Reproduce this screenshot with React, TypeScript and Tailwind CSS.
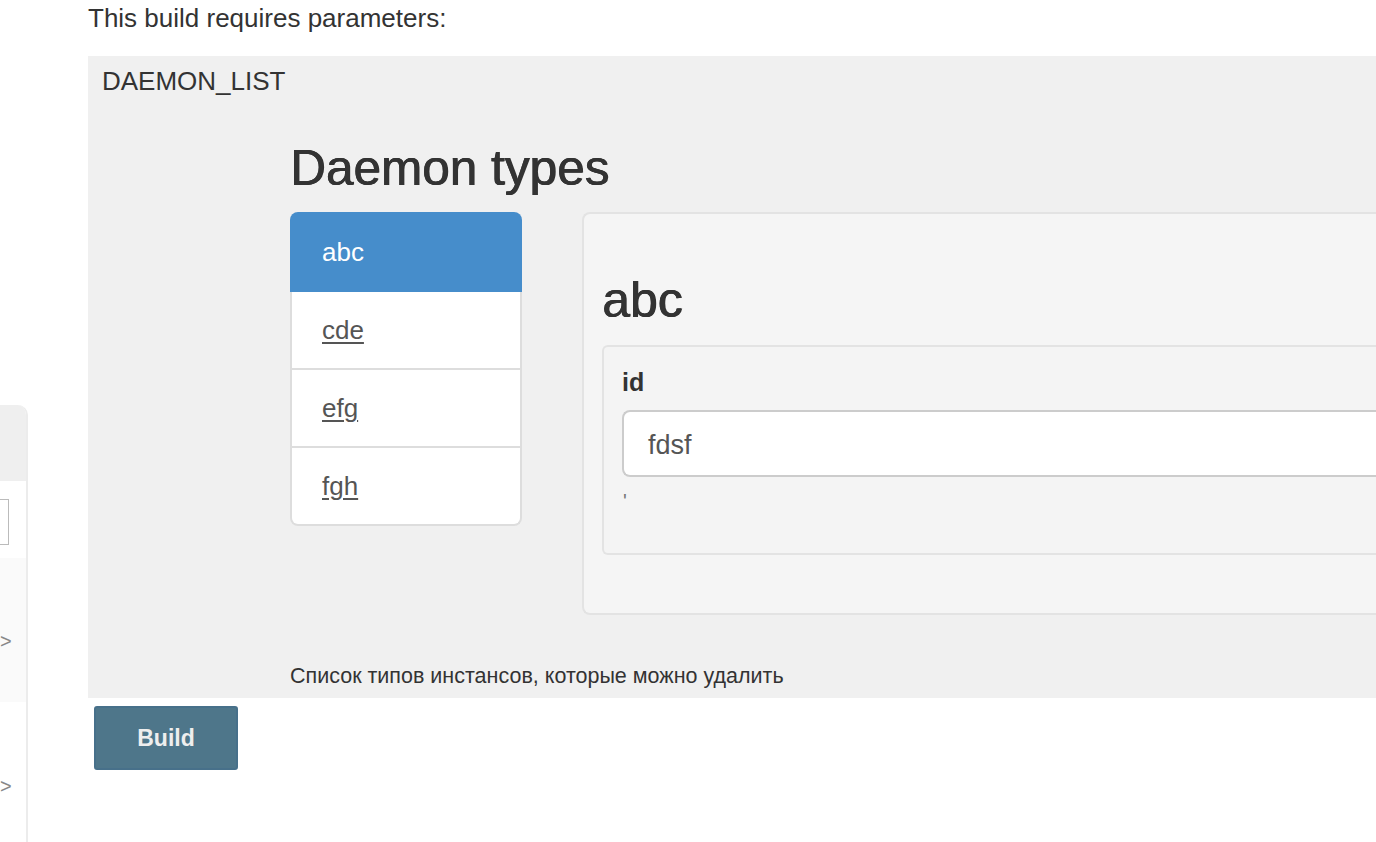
import React from "react";

const font = { fontFamily: '"Liberation Sans", Arial, Helvetica, sans-serif' };

function Sidebar() {
  return (
    <div className="w-[28px] shrink-0 pt-[405px]">
      <div className="h-[437px] flex flex-col border-r-2 border-[#ececec] rounded-tr-[10px] overflow-hidden">
        <div className="h-[76px] bg-[#efefef]" />
        <div className="h-[77px] bg-white pt-[18px]">
          <div className="w-[9px] h-[46px] border border-l-0 border-[#bbb]" />
        </div>
        <div className="h-[144px] bg-[#fafafa] pt-[73px]">
          <span className="block text-[20px] leading-[20px] text-[#888]">&gt;</span>
        </div>
        <div className="flex-1 bg-white pt-[74px]">
          <span className="block text-[20px] leading-[20px] text-[#888]">&gt;</span>
        </div>
      </div>
    </div>
  );
}

function ListGroup() {
  const items = ["cde", "efg", "fgh"];
  return (
    <div className="w-[232px] shrink-0 flex flex-col">
      <div className="h-[80px] bg-[#468dcb] rounded-t-[8px] flex items-center px-[32px] text-white text-[26px] leading-[30px]">
        abc
      </div>
      {items.map((t, i) => (
        <div
          key={t}
          className={
            "h-[78px] bg-white border-x-2 border-b-2 border-[#dddddd] flex items-center px-[30px] text-[26px] leading-[30px] " +
            (i === items.length - 1 ? "rounded-b-[8px]" : "")
          }
        >
          <a className="text-[#555] underline decoration-[2px] underline-offset-[3px]">{t}</a>
        </div>
      ))}
    </div>
  );
}

function Well() {
  return (
    <div className="flex-1 h-[403px] bg-[#f5f5f5] border-2 border-r-0 border-[#e3e3e3] rounded-l-[8px] pl-[18px] pt-[58px]">
      <div className="text-[50px] leading-[56px] font-normal text-[#333] [text-shadow:0.8px_0_0_#333,0_0.4px_0_#333]">abc</div>
      <div className="mt-[17px] h-[210px] bg-[#f4f4f4] border-2 border-r-0 border-[#e3e3e3] rounded-l-[6px] pl-[18px] pt-[20px]">
        <div className="text-[25px] leading-[30px] font-bold text-[#333]">id</div>
        <div className="mt-[13px] h-[67px] bg-white border-2 border-r-0 border-[#cccccc] rounded-l-[8px] flex items-center pl-[24px] pt-[3px] text-[27px] text-[#555]">
          fdsf
        </div>
        <div className="mt-[14px] pl-[1px] text-[20px] leading-[20px] text-[#777]">'</div>
      </div>
    </div>
  );
}

export default function App() {
  return (
    <div className="w-[1376px] h-[842px] overflow-hidden bg-white flex" style={font}>
      <Sidebar />
      <div className="ml-[60px] w-[1400px] shrink-0 flex flex-col">
        <div className="text-[26px] leading-[36px] text-[#333]">This build requires parameters:</div>
        <div className="mt-[20px] bg-[#f0f0f0] pt-[7px] pl-[14px] pb-[8px] text-[#333]">
          <div className="text-[26px] leading-[36px]">DAEMON_LIST</div>
          <div className="ml-[188px]">
            <div className="mt-[41px] text-[49.5px] leading-[56px] font-normal [text-shadow:0.8px_0_0_#333,0_0.4px_0_#333]">Daemon types</div>
            <div className="mt-[16px] flex items-start gap-[60px]">
              <ListGroup />
              <Well />
            </div>
            <div className="mt-[47px] text-[21.5px] leading-[28px]">
              Список типов инстансов, которые можно удалить
            </div>
          </div>
        </div>
        <div className="mt-[8px] ml-[6px]">
          <button className="w-[144px] h-[64px] bg-[#4e768a] border-2 border-[#47708a] rounded-[3px] text-[23px] font-bold text-[#eeeeee]">
            Build
          </button>
        </div>
      </div>
    </div>
  );
}
